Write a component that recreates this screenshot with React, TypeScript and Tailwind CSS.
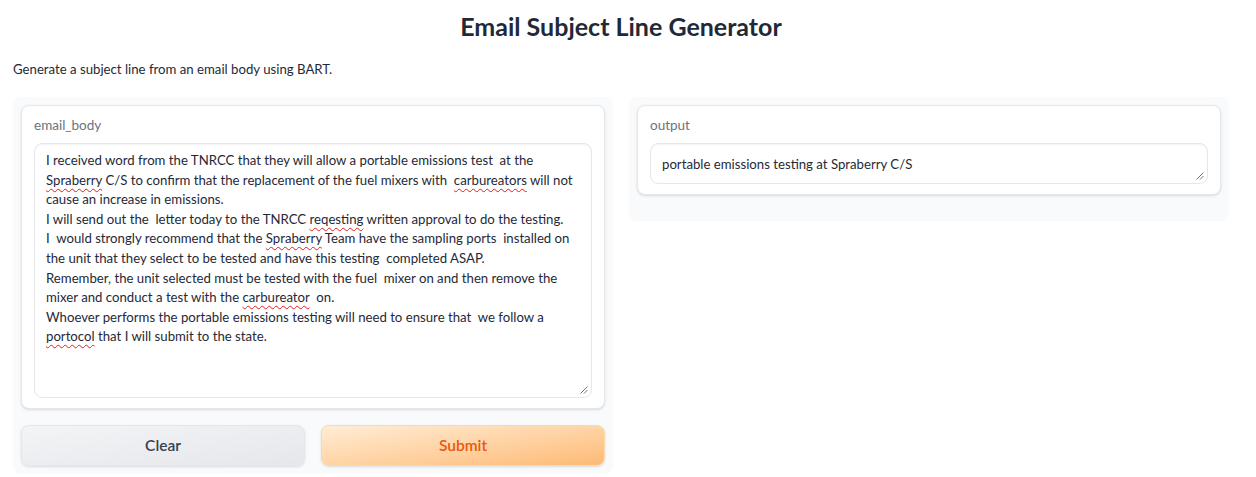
import type { ReactNode } from "react";

const FONT = "font-['Lato','Noto_Sans',sans-serif]";

// wavy red spell-check underline
function Sp({ children }: { children: ReactNode }) {
  return (
    <span className="underline decoration-wavy decoration-[#e11d21] decoration-1 underline-offset-[3px]">
      {children}
    </span>
  );
}

const BODY: ReactNode[] = [
  <>I received word from the TNRCC that they will allow a portable emissions test&nbsp; at the</>,
  <>
    <Sp>Spraberry</Sp> C/S to confirm that the replacement of the fuel mixers with&nbsp; <Sp>carbureators</Sp> will not
  </>,
  <>cause an increase in emissions.</>,
  <>
    I will send out the&nbsp; letter today to the TNRCC <Sp>reqesting</Sp> written approval to do the testing.
  </>,
  <>
    I&nbsp; would strongly recommend that the <Sp>Spraberry</Sp> Team have the sampling ports&nbsp; installed on
  </>,
  <>the unit that they select to be tested and have this testing&nbsp; completed ASAP.</>,
  <>Remember, the unit selected must be tested with the fuel&nbsp; mixer on and then remove the</>,
  <>
    mixer and conduct a test with the <Sp>carbureator</Sp>&nbsp; on.
  </>,
  <>Whoever performs the portable emissions testing will need to ensure that&nbsp; we follow a</>,
  <>
    <Sp>portocol</Sp> that I will submit to the state.
  </>,
];

function Grip() {
  return (
    <svg className="absolute bottom-[3px] right-[3px]" width="9" height="9" viewBox="0 0 9 9">
      <path d="M8.5 1.5 L1.5 8.5 M8.5 5 L5 8.5" stroke="#6b7280" strokeWidth="1" />
    </svg>
  );
}

function Box({ label, children, h }: { label: string; children: ReactNode; h: string }) {
  return (
    <div className="rounded-lg border border-[#e5e7eb] bg-white px-[12px] pb-[10px] pt-[9px] shadow-sm">
      <div className="mb-[8px] text-[13.5px] leading-[20px] text-[#6b7280]">{label}</div>
      <div
        className={`relative rounded-lg border border-[#e5e7eb] bg-white px-[11px] pb-[6px] pt-[7px] text-[13.2px] leading-[19.6px] text-[#1f2937] shadow-[inset_0_1px_2px_rgba(0,0,0,0.05)] ${h}`}
      >
        {children}
        <Grip />
      </div>
    </div>
  );
}

export default function App() {
  return (
    <div className={`${FONT} w-[1256px] bg-white`}>
      <div className="ml-[13px] w-[1216px]">
        <h1 className="pt-[11px] text-center text-[25px] font-bold leading-[30px] text-[#1f2937]">
          Email Subject Line Generator
        </h1>
        <p className="mt-[19px] text-[13.2px] leading-[18px] text-[#1f2937]">
          Generate a subject line from an email body using BART.
        </p>

        <div className="mt-[19px] flex items-start gap-[16px]">
          <div className="flex w-[600px] flex-col gap-[16px] rounded-lg bg-[#f9fafb] p-[8px]">
            <Box label="email_body" h="h-[255px]">
              {BODY.map((line, i) => (
                <div key={i} className="whitespace-nowrap">
                  {line}
                </div>
              ))}
            </Box>
            <div className="flex gap-[16px]">
              <button
                type="button"
                className="h-[41px] flex-1 rounded-lg border border-[#e5e7eb] bg-gradient-to-br from-[#f3f4f6] to-[#e5e7eb] text-[15.5px] font-semibold text-[#374151] shadow-sm"
              >
                Clear
              </button>
              <button
                type="button"
                className="h-[41px] flex-1 rounded-lg border border-[#fed7aa] bg-gradient-to-br from-[#ffedd5] to-[#fdba74] text-[15.5px] font-semibold text-[#ea580c] shadow-sm"
              >
                Submit
              </button>
            </div>
          </div>

          <div className="w-[600px] rounded-lg bg-[#f9fafb] p-[8px] pb-[26px]">
            <Box label="output" h="h-[41px]">
              <div className="whitespace-nowrap pt-[4px]">portable emissions testing at Spraberry C/S</div>
            </Box>
          </div>
        </div>
      </div>
    </div>
  );
}
